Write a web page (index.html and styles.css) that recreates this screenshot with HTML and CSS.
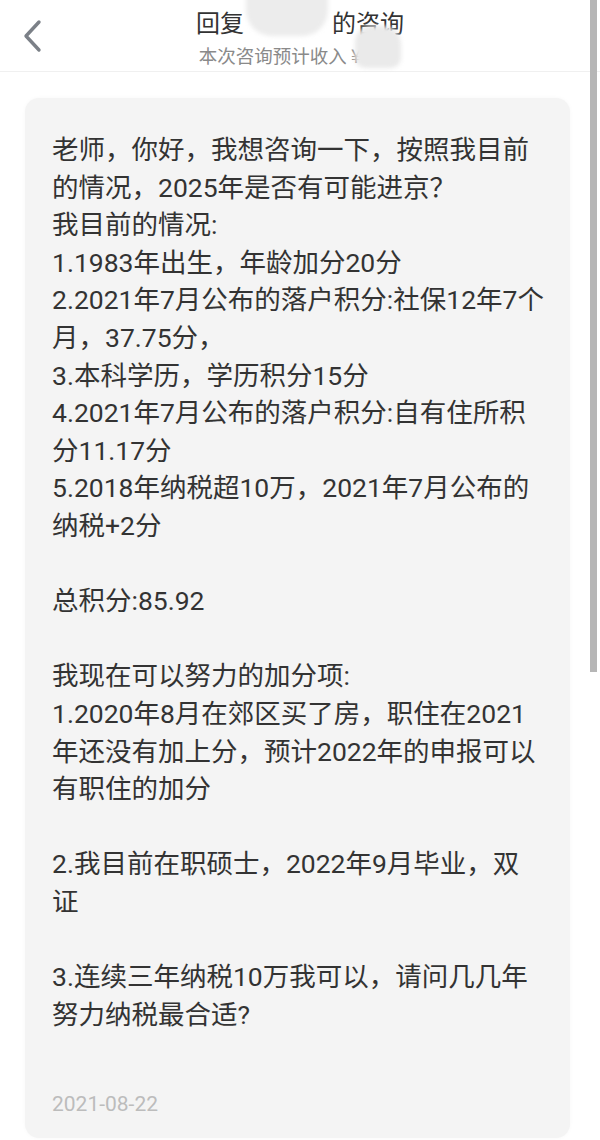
FILE: index.html
```html
<!DOCTYPE html>
<html lang="zh">
<head>
<meta charset="utf-8">
<title>回复的咨询</title>
<link rel="stylesheet" href="styles.css">
</head>
<body>
<div class="page">
  <header class="topbar">
    <div class="back">
      <svg width="22" height="34" viewBox="0 0 22 34"><path d="M18 3 L5 17 L18 31" fill="none" stroke="#7b8087" stroke-width="3.4" stroke-linecap="round" stroke-linejoin="round"/></svg>
    </div>
    <div class="titles">
      <div class="title">回复<span class="gap"></span>的咨询</div>
      <div class="sub">本次咨询预计收入 ¥<span class="gap2"></span></div>
    </div>
    <span class="blob blob1"></span>
    <span class="blob blob2"></span>
  </header>
  <main class="card">
    <div class="msg">
      <p>老师，你好，我想咨询一下，按照我目前的情况，2025年是否有可能进京？<br>我目前的情况:<br>1.1983年出生，年龄加分20分<br>2.2021年7月公布的落户积分:社保12年7个月，37.75分，<br>3.本科学历，学历积分15分<br>4.2021年7月公布的落户积分:自有住所积分11.17分<br>5.2018年纳税超10万，2021年7月公布的纳税+2分</p>
      <p>总积分:85.92</p>
      <p>我现在可以努力的加分项:<br>1.2020年8月在郊区买了房，职住在2021年还没有加上分，预计2022年的申报可以有职住的加分</p>
      <p>2.我目前在职硕士，2022年9月毕业，双<br>证</p>
      <p>3.连续三年纳税10万我可以，请问几几年努力纳税最合适?</p>
    </div>
    <div class="date">2021-08-22</div>
  </main>
  <div class="scrollbar"></div>
</div>
</body>
</html>
```
FILE: styles.css
```css
* { box-sizing: border-box; }
html, body { margin: 0; padding: 0; background: #fff; }
body { font-family: Roboto, "Noto Sans CJK SC", sans-serif; color: #333; }
.page { position: relative; width: 600px; height: 1140px; overflow: hidden; }
.topbar {
  position: relative;
  height: 72px;
  border-bottom: 1px solid #f0f0f0;
  display: flex;
  align-items: flex-start;
  justify-content: center;
}
.back { position: absolute; left: 21px; top: 19px; }
.back svg { display: block; }
.titles { display: flex; flex-direction: column; align-items: center; padding-top: 6px; }
.title { font-size: 24px; line-height: 32px; color: #333; font-family: "Noto Sans CJK SC", sans-serif; }
.gap { display: inline-block; width: 88px; }
.sub { font-size: 18.5px; line-height: 24px; color: #8a8a8a; margin-top: 5px; font-family: "Noto Sans CJK SC", sans-serif; }
.gap2 { display: inline-block; width: 40px; }
.blob { position: absolute; background: #ececec; filter: blur(2px); }
.blob1 { left: 246px; top: -4px; width: 82px; height: 40px; border-radius: 0 0 26px 26px; }
.blob2 { left: 355px; top: 26px; width: 46px; height: 42px; border-radius: 16px 18px 10px 10px; background: #eaeaea; }
.card {
  margin: 26px 0 0 25px;
  width: 545px;
  height: 1040px;
  background: #f4f4f4;
  border-radius: 14px;
  padding: 33px 18px 0 27px;
  box-shadow: 0 0 4px rgba(0,0,0,0.03);
}
.msg p { margin: 0 0 37.6px 0; font-size: 26.5px; line-height: 37.6px; color: #333; }
.msg p:last-child { margin-bottom: 0; }
.date { margin-top: 57px; font-size: 21px; line-height: 28px; color: #bcbcbc; }
.scrollbar { position: absolute; right: 3px; top: 0; width: 7px; height: 672px; background: #b6b6b6; }
```
